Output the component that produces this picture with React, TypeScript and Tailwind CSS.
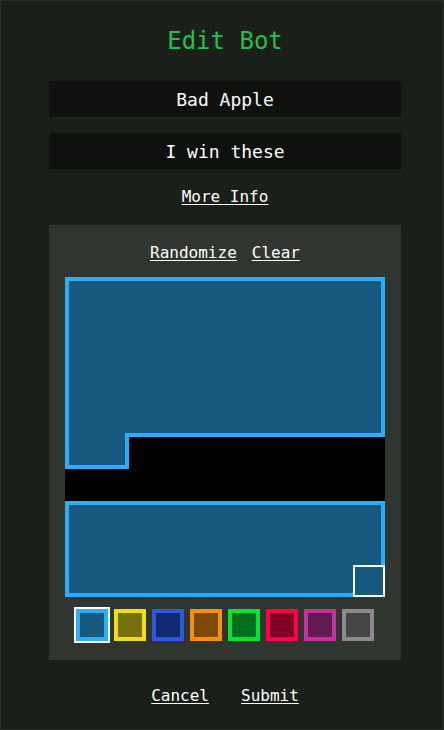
import React from 'react'

const ROWS = [
  '1111111111',
  '1111111111',
  '1111111111',
  '1111111111',
  '1111111111',
  '1100000000',
  '0000000000',
  '1111111111',
  '1111111111',
  '1111111111',
]

const CURSOR = { r: 9, c: 9 }

const SWATCHES = [
  { border: 'border-[#2aadfb]', fill: 'bg-[#17587f]', selected: true },
  { border: 'border-[#eedf10]', fill: 'bg-[#776f08]' },
  { border: 'border-[#2b58e0]', fill: 'bg-[#142b70]' },
  { border: 'border-[#f79208]', fill: 'bg-[#7c4a02]' },
  { border: 'border-[#00e436]', fill: 'bg-[#006e1e]' },
  { border: 'border-[#ff0048]', fill: 'bg-[#7f0026]' },
  { border: 'border-[#c132a0]', fill: 'bg-[#611a50]' },
  { border: 'border-[#8a8a8a]', fill: 'bg-[#454545]' },
]

const on = (r: number, c: number) => r >= 0 && r < 10 && c >= 0 && c < 10 && ROWS[r][c] === '1'

function Cell({ r, c }: { r: number; c: number }) {
  if (!on(r, c)) return <div className="w-8 h-8 bg-black" />
  if (r === CURSOR.r && c === CURSOR.c) {
    return <div className="w-8 h-8 bg-[#17587f] border-2 border-white" />
  }
  const t = !on(r - 1, c)
  const b = !on(r + 1, c)
  const l = !on(r, c - 1)
  const rt = !on(r, c + 1)
  const br = on(r + 1, c) && on(r, c + 1) && !on(r + 1, c + 1)
  const bl = on(r + 1, c) && on(r, c - 1) && !on(r + 1, c - 1)
  const tr = on(r - 1, c) && on(r, c + 1) && !on(r - 1, c + 1)
  const tl = on(r - 1, c) && on(r, c - 1) && !on(r - 1, c - 1)
  return (
    <div
      className={`relative w-8 h-8 bg-[#17587f] border-[#2aadfb] ${t ? 'border-t-4' : ''} ${b ? 'border-b-4' : ''} ${l ? 'border-l-4' : ''} ${rt ? 'border-r-4' : ''}`}
    >
      {br && <div className="absolute right-0 bottom-0 w-1 h-1 bg-[#2aadfb]" />}
      {bl && <div className="absolute left-0 bottom-0 w-1 h-1 bg-[#2aadfb]" />}
      {tr && <div className="absolute right-0 top-0 w-1 h-1 bg-[#2aadfb]" />}
      {tl && <div className="absolute left-0 top-0 w-1 h-1 bg-[#2aadfb]" />}
    </div>
  )
}

export default function App() {
  return (
    <div
      className="min-h-[730px] bg-[#1b1f19] border border-[#2a2e28] pl-[6px] flex flex-col items-center text-white"
      style={{ fontFamily: '"DejaVu Sans Mono", "Liberation Mono", monospace' }}
    >
      <h1 className="mt-[24px] text-[24px] leading-[32px] text-[#22c04c]">Edit Bot</h1>

      <div className="mt-[24px] w-[352px] h-9 bg-[#0e110d] flex items-center justify-center text-[18px]">
        Bad Apple
      </div>
      <div className="mt-4 w-[352px] h-9 bg-[#0e110d] flex items-center justify-center text-[18px]">
        I win these
      </div>

      <a className="mt-4 text-[16px] leading-6 underline underline-offset-2 cursor-pointer">More Info</a>

      <div className="mt-4 w-[352px] bg-[#31352f] px-4 pt-4 pb-[19px] flex flex-col items-center">
        <div className="flex gap-[15px] text-[16px] leading-6">
          <a className="underline underline-offset-2 cursor-pointer">Randomize</a>
          <a className="underline underline-offset-2 cursor-pointer">Clear</a>
        </div>

        <div className="mt-3 grid grid-cols-10 w-[320px]">
          {ROWS.map((row, r) =>
            row.split('').map((_, c) => <Cell key={`${r}-${c}`} r={r} c={c} />)
          )}
        </div>

        <div className="mt-3 flex gap-1.5">
          {SWATCHES.map((s, i) => (
            <div
              key={i}
              className={`w-8 h-8 border-4 ${s.border} ${s.selected ? 'outline-2 outline-white' : ''}`}
            >
              <div className={`w-full h-full ${s.fill}`} />
            </div>
          ))}
        </div>
      </div>

      <div className="mt-[24px] flex gap-8 text-[16px] leading-6">
        <a className="underline underline-offset-2 cursor-pointer">Cancel</a>
        <a className="underline underline-offset-2 cursor-pointer">Submit</a>
      </div>
    </div>
  )
}
